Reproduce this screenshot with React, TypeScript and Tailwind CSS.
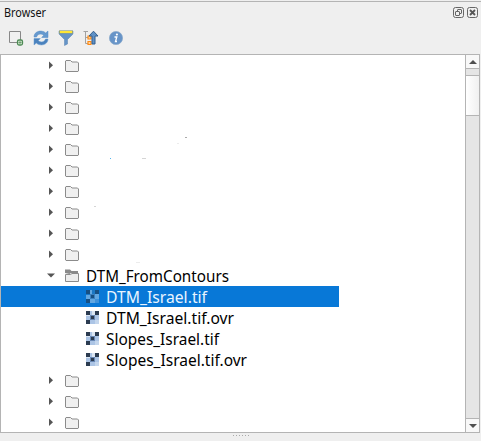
import React from 'react';

function Folder({ open = false }: { open?: boolean }) {
  return (
    <svg width="16" height="14" viewBox="0 0 16 14" className="shrink-0">
      {open ? (
        <>
          <path d="M1 4V0.5H6L7.5 2H14V4H7L5.5 5Z" fill="#8a8a8a" />
          <path d="M1.5 5.5H6.5L8 4.5H14.5V12.5H1.5Z" fill="#ededed" stroke="#8b8b8b" />
        </>
      ) : (
        <path d="M2 1.5H6.5L8 3H13.5L14.5 4V12L14 12.5H2L1.5 12V2Z" fill="#f0f0f0" stroke="#8b8b8b" />
      )}
    </svg>
  );
}

function Raster({ selected = false }: { selected?: boolean }) {
  const dark = selected ? '#164f83' : '#2b3b50';
  return (
    <svg width="13" height="13" viewBox="0 0 13 13" className="shrink-0" shapeRendering="crispEdges">
      <rect width="13" height="13" fill={selected ? '#62a7e1' : '#abc4e5'} />
      <path d="M0 0h4v4H0zM9 0h4v4H9zM0 9h4v4H0z" fill={dark} />
      <path d="M6 0h3v4H6zM0 4h4v1H0z" fill={selected ? '#1b78c5' : '#dbe6f3'} />
      <path d="M9 9h4v4H9z" fill={selected ? '#3d91da' : '#c4d6ec'} />
      <path d="M4 4h5v5H4z" fill={selected ? '#3b7fbd' : '#6887b3'} />
      <path d="M5 5h3v3H5z" fill={dark} />
    </svg>
  );
}

function FolderRow({ label }: { label?: string }) {
  return (
    <div className="flex h-[21px] items-center pl-[46px]">
      <svg width="9" height="9" viewBox="0 0 9 9" className="mr-[8px] shrink-0">
        <path d={label ? 'M0 2.5H8L4 6.5Z' : 'M2 0.5V8L6 4.25Z'} fill="#555" />
      </svg>
      <Folder open={!!label} />
      {label && <Label text={label} width={143} className="ml-[6px]" />}
    </div>
  );
}

function Label({ text, width, className = '' }: { text: string; width: number; className?: string }) {
  return (
    <svg width={width + 2} height="21" className={`shrink-0 overflow-visible ${className}`}>
      <text x="0" y="17" textLength={width} lengthAdjust="spacingAndGlyphs" fontSize="17" fill="currentColor">{text}</text>
    </svg>
  );
}

const FILES = [
  { name: 'DTM_Israel.tif', width: 101 },
  { name: 'DTM_Israel.tif.ovr', width: 128 },
  { name: 'Slopes_Israel.tif', width: 113 },
  { name: 'Slopes_Israel.tif.ovr', width: 141 },
];

function Toolbar() {
  return (
    <div className="flex h-[32px] items-center gap-[9px] pl-[8px]">
      <svg width="16" height="16" viewBox="0 0 16 16">
        <path d="M1.5 1.5H12.5V12.5H1.5Z" fill="#f1f1f1" stroke="#888" />
        <rect x="9.5" y="10" width="5" height="5" rx="1.5" fill="#d9ead5" stroke="#4d8a55" strokeWidth="1.3" />
        <path d="M12 11v3M10.5 12.5h3" stroke="#4d8a55" strokeWidth=".7" />
      </svg>
      <svg width="16" height="16" viewBox="0 0 16 16">
        <path d="M1 7C1 2.8 5 .5 9 1.2C10.5 1.4 11.7 2 12.7 3L15 1V7.5H8.7L10.7 5.2C8 3.2 4.5 4 3.5 7Z" fill="#6699ce" stroke="#548bc4" strokeWidth=".5" />
        <path d="M15 9C15 13.2 11 15.5 7 14.8C5.5 14.6 4.3 14 3.3 13L1 15V8.5H7.3L5.3 10.8C8 12.8 11.5 12 12.5 9Z" fill="#4b82bd" stroke="#659bd0" strokeWidth=".5" />
      </svg>
      <svg width="16" height="16" viewBox="0 0 16 16">
        <path d="M1 1H15V4L9.5 9.5V14L6.5 15.5V9.5L1 4Z" fill="#6594c7" stroke="#5682b2" strokeWidth=".5" />
        <path d="M1 .5H15V3.5H1Z" fill="#9aa674" />
        <path d="M2 1H14V3H2Z" fill="#ffe634" />
      </svg>
      <svg width="16" height="16" viewBox="0 0 16 16">
        <path d="M.5 1.5H5M2.5 1.5V13.5H5M2.5 7.5H5" fill="none" stroke="#a2a2a2" />
        <path d="M5 6H8V9H5ZM5 11.5H8V14.5H5Z" fill="#ffd29b" stroke="#ff8a13" strokeWidth="1.2" />
        <path d="M10.5 1.2L15 6H12V14H9V6H6Z" fill="#5f91c7" stroke="#345f8d" />
      </svg>
      <svg width="16" height="16" viewBox="0 0 16 16">
        <circle cx="8" cy="8" r="6.6" fill="#6794c8" stroke="#89a9ca" strokeWidth=".7" />
        <circle cx="8.9" cy="4.5" r="1.1" fill="white" />
        <path d="M6.5 7H8.8L7.5 11.5H9" fill="none" stroke="white" strokeWidth="1.3" />
      </svg>
    </div>
  );
}

function ScrollBar() {
  return (
    <div className="flex w-[14px] flex-col border-l border-[#b4b4b4] bg-[#e5e5e5]">
      <div className="flex h-[14px] items-center justify-center border-b border-[#b4b4b4] bg-[#f8f8f8]">
        <svg width="8" height="4" viewBox="0 0 8 4"><path d="M0 4L4 0L8 4Z" fill="#4f4f4f" /></svg>
      </div>
      <div className="h-[6px]" />
      <div className="h-[41px] border-y border-[#b4b4b4] bg-gradient-to-r from-white to-[#f0f0f0]" />
      <div className="flex-1" />
      <div className="flex h-[14px] items-center justify-center border-t border-[#b4b4b4] bg-[#f8f8f8]">
        <svg width="8" height="4" viewBox="0 0 8 4"><path d="M0 0H8L4 4Z" fill="#4f4f4f" /></svg>
      </div>
    </div>
  );
}

export default function App() {
  return (
    <div className="flex h-[441px] w-[481px] flex-col overflow-hidden bg-[#efefef] font-['Noto_Sans',sans-serif] text-black">
      <div className="mt-px flex h-[21px] items-center border-t border-[#b4b4b4] pl-[4px]">
        <svg width="43" height="18" className="overflow-visible">
          <text x="0" y="14" fontSize="12.5" textLength="42" lengthAdjust="spacingAndGlyphs" fill="#111">Browser</text>
        </svg>
        <div className="ml-auto mr-[3px] flex gap-[3px]">
          <svg width="11" height="11" viewBox="0 0 11 11" fill="none" stroke="#666">
            <rect x=".5" y=".5" width="10" height="10" rx="2" />
            <rect x="4.5" y="2.5" width="4" height="4" rx=".5" />
            <rect x="2.5" y="4.5" width="4" height="4" rx=".5" fill="#efefef" />
          </svg>
          <svg width="11" height="11" viewBox="0 0 11 11" fill="none" stroke="#666">
            <rect x=".5" y=".5" width="10" height="10" rx="2" />
            <path d="M3 3L8 8M8 3L3 8" stroke="#555" strokeWidth="1.8" />
          </svg>
        </div>
      </div>
      <Toolbar />
      <div className="mr-px flex h-[379px] border border-[#b4b4b4] bg-white">
        <div className="relative flex-1 overflow-hidden">
          {Array.from({ length: 10 }, (_, i) => <FolderRow key={i} />)}
          <FolderRow label="DTM_FromContours" />
          {FILES.map((file, i) => (
            <div key={file.name} className={`flex h-[21px] items-center pl-[85px] ${i === 0 ? 'w-[338px] bg-[#0878d7] text-[#e9f5ff]' : ''}`}>
              <Raster selected={i === 0} />
              <Label text={file.name} width={file.width} className="ml-[7px]" />
            </div>
          ))}
          {Array.from({ length: 3 }, (_, i) => <FolderRow key={i} />)}
          <svg className="pointer-events-none absolute inset-0" width="464" height="377" shapeRendering="crispEdges">
            <path d="M184 82h2v1h-2z" fill="#aaa" />
            <path d="M109 103h1v1h-1z" fill="#54b5ee" />
            <path d="M141 103h4v1h-4zM93 151h2v1h-2z" fill="#d5d5d5" />
            <path d="M176 88h2v1h-2zM135 207h4v1h-4z" fill="#ececec" />
          </svg>
        </div>
        <ScrollBar />
      </div>
      <div className="flex h-[8px] justify-center gap-[2px] pt-[2px]">
        {Array.from({ length: 6 }, (_, i) => <span key={i} className="size-px bg-[#aaa]" />)}
      </div>
    </div>
  );
}
